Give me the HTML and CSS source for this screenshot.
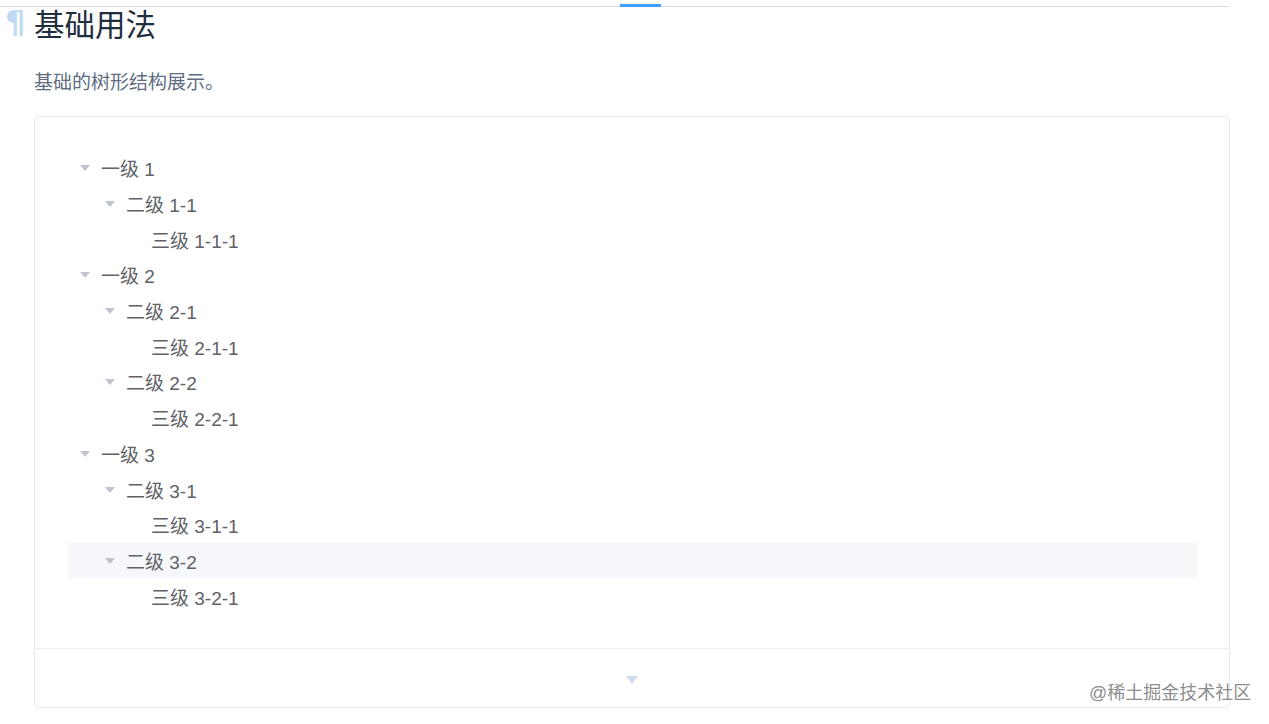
FILE: index.html
```html
<!DOCTYPE html>
<html>
<head>
    <title>基础用法</title>
    <link rel="stylesheet" href="styles.css">
</head>
<body>
    <div class="topbar">
        <span class="tab-marker"></span>
    </div>

    <h3 class="title">
        <a class="anchor" href="#">¶</a>
        基础用法
    </h3>
    <p class="desc">基础的树形结构展示。</p>

    <div class="demo-block">
        <div class="tree">
            <div class="node level-1"><span class="caret"></span><span class="label">一级 1</span></div>
            <div class="node level-2"><span class="caret"></span><span class="label">二级 1-1</span></div>
            <div class="node level-3"><span class="caret leaf"></span><span class="label">三级 1-1-1</span></div>
            <div class="node level-1"><span class="caret"></span><span class="label">一级 2</span></div>
            <div class="node level-2"><span class="caret"></span><span class="label">二级 2-1</span></div>
            <div class="node level-3"><span class="caret leaf"></span><span class="label">三级 2-1-1</span></div>
            <div class="node level-2"><span class="caret"></span><span class="label">二级 2-2</span></div>
            <div class="node level-3"><span class="caret leaf"></span><span class="label">三级 2-2-1</span></div>
            <div class="node level-1"><span class="caret"></span><span class="label">一级 3</span></div>
            <div class="node level-2"><span class="caret"></span><span class="label">二级 3-1</span></div>
            <div class="node level-3"><span class="caret leaf"></span><span class="label">三级 3-1-1</span></div>
            <div class="node level-2 hover"><span class="caret"></span><span class="label">二级 3-2</span></div>
            <div class="node level-3"><span class="caret leaf"></span><span class="label">三级 3-2-1</span></div>
        </div>
        <div class="demo-control">
            <span class="control-arrow"></span>
        </div>
    </div>

    <div class="watermark">@稀土掘金技术社区</div>
</body>
</html>
```

FILE: styles.css
```css
body {
    margin: 0;
    font-family: "Liberation Sans", "Noto Sans CJK SC", sans-serif;
    background: #fff;
    width: 1269px;
    height: 724px;
    overflow: hidden;
    position: relative;
}

.topbar {
    position: relative;
    width: 1230px;
    height: 6px;
    border-bottom: 1px solid #dcdfe6;
}

.tab-marker {
    position: absolute;
    left: 620px;
    bottom: -1px;
    width: 41px;
    height: 3px;
    background: #409eff;
}

.title {
    position: relative;
    margin: 0 0 0 34px;
    font-size: 30.5px;
    font-weight: normal;
    line-height: 36px;
    color: #1f2f3d;
}

.anchor {
    position: absolute;
    left: -29px;
    top: -3px;
    color: #c0d9f5;
    text-decoration: none;
    font-size: 32px;
    font-weight: bold;
    font-family: "DejaVu Sans", sans-serif;
}

.desc {
    margin: 26px 0 0 34px;
    font-size: 19px;
    line-height: 27px;
    color: #5e6d82;
}

.demo-block {
    margin: 20px 0 0 34px;
    width: 1194px;
    height: 590px;
    border: 1px solid #ebebeb;
    border-radius: 4px;
    display: flex;
    flex-direction: column;
}

.tree {
    padding: 33px 32px 0 33px;
    height: 498px;
}

.node {
    display: flex;
    align-items: center;
    height: 35.7px;
    font-size: 19px;
    color: #606266;
}

.node.hover {
    background: #f5f7fa;
}

.level-1 { padding-left: 0; }
.level-2 { padding-left: 25px; }
.level-3 { padding-left: 50px; }

.caret {
    width: 0;
    height: 0;
    border-left: 5px solid transparent;
    border-right: 5px solid transparent;
    border-top: 6px solid #c0c4cc;
    margin: 1px 11px 0 12px;
}

.caret.leaf {
    border-top-color: transparent;
}

.demo-control {
    flex: 1;
    border-top: 1px solid #eaeefb;
    display: flex;
    justify-content: center;
    align-items: center;
}

.control-arrow {
    width: 0;
    height: 0;
    border-left: 6px solid transparent;
    border-right: 6px solid transparent;
    border-top: 8px solid #d3dce6;
    margin-top: 4px;
}

.watermark {
    position: absolute;
    left: 1089px;
    top: 681px;
    font-size: 18px;
    line-height: 24px;
    color: #8e8e8e;
    text-shadow: 0 0 2px #fff, 0 0 2px #fff;
}
```
